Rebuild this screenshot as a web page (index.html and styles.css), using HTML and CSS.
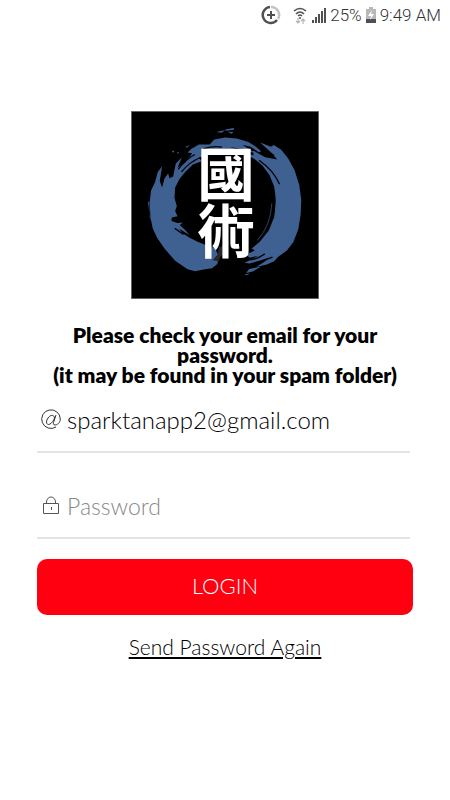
FILE: index.html
```
<!DOCTYPE html>
<html lang="en">
<head>
    <meta charset="UTF-8">
    <meta name="viewport" content="width=device-width, initial-scale=1">
    <title>Login</title>
    <link rel="stylesheet" href="styles.css">
</head>
<body>
<header class="status">
    <svg class="data-icon" width="20" height="20" viewBox="0 0 20 20" fill="none">
        <path d="M10 2a8 8 0 0 1 7 12" stroke="#c4c4c4" stroke-width="2.500"/>
        <path d="M9 2a8 8 0 1 0 7 13" stroke="#505050" stroke-width="2.500"/>
        <path d="M10 6v8M6 10h8" stroke="#505050" stroke-width="2"/>
    </svg>
    <svg width="16" height="20" viewBox="0 0 16 20" fill="none">
        <path d="M2 6q6-5 12 0M4 9q4-4 8 0M6 11q2-2 4 0" stroke="#505050" stroke-width="1.6"/>
        <circle cx="8" cy="13" r="1" fill="#505050"/>
        <path d="M6 13v5M4 16l2 2 2-2M11 19v-5M9 16l2-2 2 2" stroke="#b4b4b4" stroke-width="1.2"/>
    </svg>
    <svg width="16" height="16" viewBox="0 0 16 16" fill="#505050">
        <path d="M1 13h2v3H1zM4 10h2v6H4zM7 7h2v9H7zM10 4h2v12h-2zM13 1h2v15h-2z"/>
    </svg>
    <span>25%</span>
    <svg width="12" height="16" viewBox="0 0 12 16">
        <path d="M4 0h4v2h3v14H1V2h3z" fill="#b8b8b8"/>
        <path d="M1 12h10v4H1z" fill="#505050"/>
        <path d="M7 3L3 9h3l-1 4 4-6H6z" fill="#fff"/>
    </svg>
    <span>9:49 AM</span>
</header>
<main class="login">
    <svg class="logo" viewBox="19 19 562 562" role="img" aria-label="國術">
        <rect x="19" y="19" width="562" height="562" fill="#000"/>
        <g fill="#3f6192">
            <path d="M268 104L300 98 335 101 370 112 394 127 408 139 401 142 376 126 352 120 389 144 379 142 352 132 315 127 365 145 385 152 384 137 420 157 456 164 438 143 405 113 437 126 446 121 468 135 489 161 508 196 522 240 528 285 526 330 519 373 504 411 485 436 459 455 447 468 425 478 393 485 418 470 433 457 405 466 373 475 358 473 380 463 398 452 374 458 362 449 389 436 380 430 404 410 431 376 447 336 453 290 447 245 433 210 411 181 385 160 350 145 300 140 255 145 222 159 230 169 204 179 181 201 164 222 151 248 149 279 156 303 151 318 158 334 141 337 140 348 158 354 174 352 165 360 183 377 194 390 163 371 172 384 193 397 218 410 246 421 270 429 282 454 277 476 261 489 236 493 211 498 188 492 151 467 119 430 97 398 84 370 77 334 75 290 79 257 91 231 99 201 112 184 105 228 112 248 119 221 130 206 134 220 145 215 153 176 171 158 158 189 182 172 202 145 188 143 200 132 222 119 254 119z"/>
            <path d="M274 82l28-6-13 8zM300 74l26-4 1 5-24 3zM308 81l18 1-7 5zM182 126l13-5-9 8zM141 140l8-4-3 8zM156 144l8-4-5 7zM372 491l36-7-25 15-20 4zM358 507l18-2-12 5z"/>
            <path d="M70 290l4 0 0 37 11 34-10-25zM453 246l5 56-10 54 3-52z"/>
        </g>
        <g fill="none" stroke="#000" stroke-width="4">
            <path d="M170 201q24-30 57-43M160 193q27-33 50-44M235 132q32-10 56-5M402 166q44 31 61 72M430 142l17 10M404 470l38-14M419 446q-25 17-44 18M150 370l26 18"/>
            <path d="M440 295q-3 65-43 111" stroke="#3f6192" stroke-width="2"/>
        </g>
        <path d="M282 426l14-4 6 21-15 11-6 14-18-3 15-17z" fill="#292629"/>
        <text class="logo-text" x="303" y="293">國術</text>
        <rect x="20" y="20" width="560" height="560" fill="none" stroke="#777" stroke-width="3"/>
    </svg>
    <p class="message">Please check your email for your password.<br>(it may be found in your spam folder)</p>
    <form class="form">
        <div class="field">
            <label for="email" aria-label="Email">
                <svg width="20" height="22" viewBox="0 0 20 22" fill="none" stroke="#333">
                    <path d="M15 19A9.300 9.300 0 1 1 19.300 11C19.300 15 16 17 14 17C12 17 12 15 13 13L15 7M13.500 10C13 6 9 7 7 10C4 14 6 18 9 16C11 15 13 12 13.500 10"/>
                </svg>
            </label>
            <input id="email" type="email" value="sparktanapp2@gmail.com">
        </div>
        <div class="field">
            <label for="password" aria-label="Password">
                <svg width="20" height="22" viewBox="0 0 20 22" fill="none" stroke="#555">
                    <path d="M2.500 9.500h15v10h-15zM5.500 9V8a4.500 5 0 0 1 9 0v1M10.500 13v3"/>
                </svg>
            </label>
            <input id="password" type="password" placeholder="Password">
        </div>
        <button class="submit" type="submit">LOGIN</button>
    </form>
    <a class="again" href="#">Send Password Again</a>
</main>
</body>
</html>
```
FILE: styles.css
```
* {
    box-sizing: border-box;
}
body {
    margin: 0;
    background: #fff;
    color: #000;
    font-family: Lato, "Liberation Sans", sans-serif;
}
.status {
    display: flex;
    align-items: center;
    justify-content: flex-end;
    gap: 3px;
    height: 30px;
    padding-right: 9px;
    color: #333;
    font-family: Roboto, sans-serif;
    font-size: 17px;
    font-weight: 300;
}
.data-icon {
    margin-right: 8px;
}
.login {
    display: flex;
    flex-direction: column;
    align-items: center;
    padding: 81px 37px 40px;
}
.logo {
    width: 188px;
    height: 188px;
}
.logo-text {
    fill: #fff;
    font-family: "Noto Sans CJK TC", sans-serif;
    font-size: 172px;
    font-weight: 700;
    text-anchor: middle;
    writing-mode: vertical-rl;
}
.message {
    margin: 26px 0 2px;
    font-size: 21px;
    font-weight: 800;
    line-height: 20px;
    text-align: center;
}
.form {
    display: flex;
    flex-direction: column;
    gap: 20px;
    width: 100%;
}
.field {
    display: flex;
    align-items: center;
    gap: 6px;
    height: 66px;
    margin-right: 3px;
    padding: 0 0 0 4px;
    border-bottom: 2px solid #e4e4e4;
}
.field label {
    display: flex;
}
.field input {
    flex: 1;
    min-width: 0;
    padding: 0;
    border: 0;
    outline: none;
    background: none;
    color: #000;
    font: 300 24px Lato, sans-serif;
}
.field input::placeholder {
    color: #888;
    font-size: 23px;
    opacity: 1;
}
.submit {
    width: 100%;
    height: 56px;
    padding-bottom: 4px;
    border: 0;
    border-radius: 10px;
    background: #ff0010;
    color: #fff;
    font: 300 22px Lato, sans-serif;
}
.again {
    margin-top: 19px;
    color: #000;
    font-size: 21px;
    font-weight: 300;
}
```
